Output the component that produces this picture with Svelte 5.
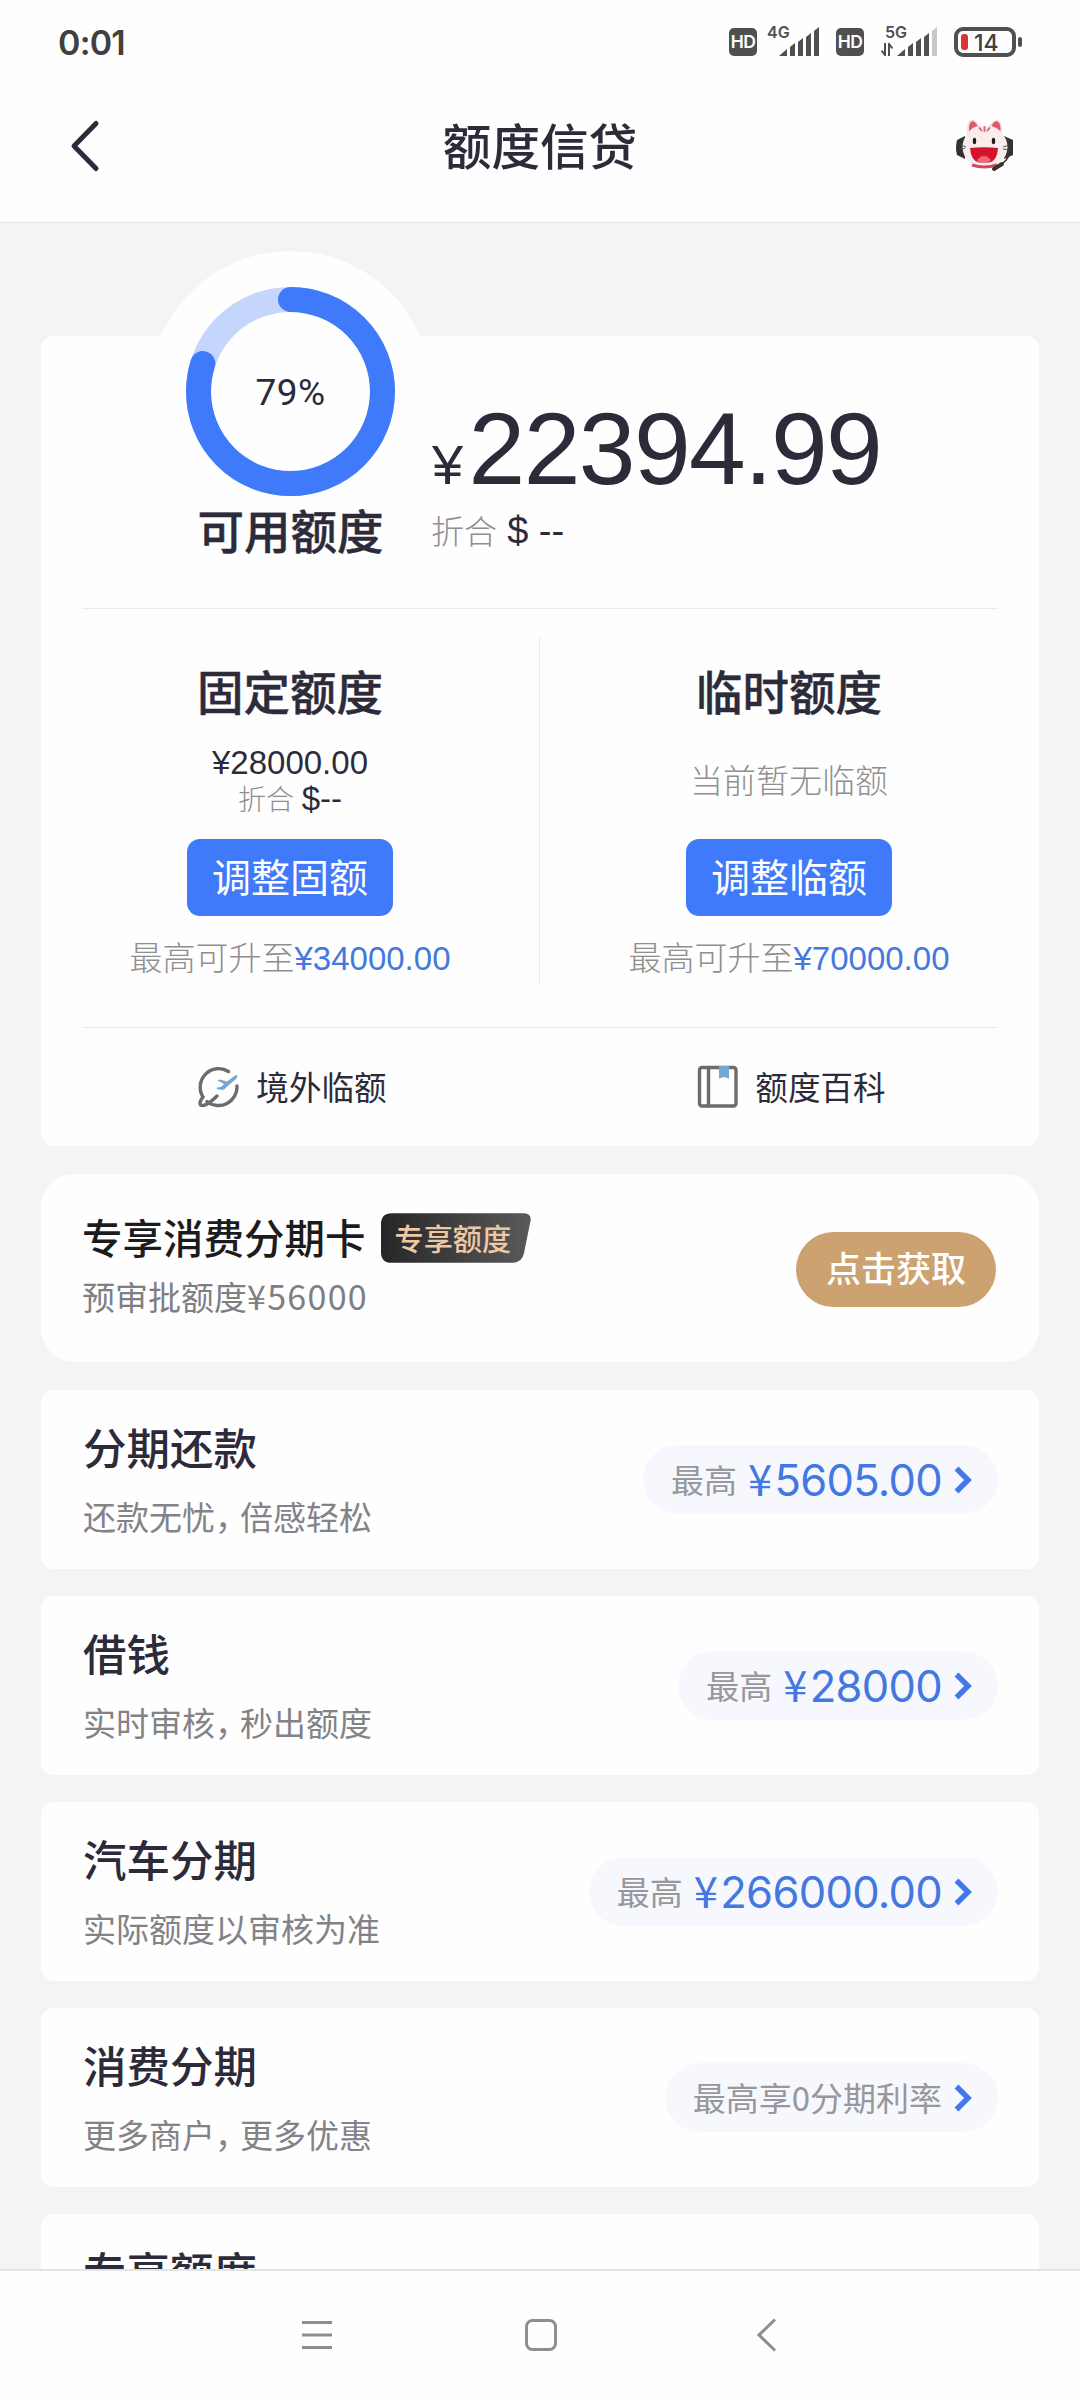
<script lang="ts">
	interface Product {
		title: string;
		desc: string;
		label?: string;
		amount?: string;
	}

	const percent = 79;

	const quotas = [
		{ title: '固定额度', amount: '28000.00', button: '调整固额', max: '34000.00' },
		{ title: '临时额度', amount: '', button: '调整临额', max: '70000.00' }
	];

	const products: Product[] = [
		{ title: '分期还款', desc: '还款无忧，倍感轻松', label: '最高', amount: '5605.00' },
		{ title: '借钱', desc: '实时审核，秒出额度', label: '最高', amount: '28000' },
		{ title: '汽车分期', desc: '实际额度以审核为准', label: '最高', amount: '266000.00' },
		{ title: '消费分期', desc: '更多商户，更多优惠', label: '最高享0分期利率' },
		{ title: '专享额度', desc: '' }
	];

	const radius = 92;
	const circumference = 2 * Math.PI * radius;
	// the round cap sits a little past the exact value
	const dash = $derived((circumference * (percent + 0.8)) / 100);
</script>

{#snippet signal(weak: boolean)}
	<svg class="bars" width="41" height="30" viewBox="0 0 41 30">
		<path d="M0 29 L8 22 V29 Z" />
		<path d="M11 20 L16 16 V29 H11 Z" />
		<path d="M19 15 L24 11 V29 H19 Z" />
		<path d="M27 10 L32 6 V29 H27 Z" />
		<path class:weak d="M35 4 L40 0 V29 H35 Z" />
	</svg>
{/snippet}

<div class="screen">
	<div class="status">
		<span class="time">0:01</span>
		<div class="status-icons">
			<span class="hd">HD</span>
			<div class="net">
				<span class="gen">4G</span>
				{@render signal(false)}
			</div>
			<span class="hd hd-second">HD</span>
			<div class="net net-second">
				<span class="gen">5G</span>
				<svg class="updown" width="12" height="13" viewBox="0 0 12 13">
					<path d="M4 0 V12 L0.5 7.5 M8 13 V1 L11.5 5.5" />
				</svg>
				{@render signal(true)}
			</div>
			<div class="battery"><i></i><span>14</span></div>
			<b class="battery-tip"></b>
		</div>
	</div>

	<header>
		<svg class="back" width="34" height="54" viewBox="0 0 34 54">
			<path d="M27 4.5 L5 27 L27 49.5" />
		</svg>
		<h1>额度信贷</h1>
		<svg class="mascot" width="64" height="58" viewBox="0 0 64 58">
			<path d="M12 19 L4 23 Q2 31 4 38 L12 42 Z" fill="#333" />
			<path d="M51 19 L60 23 V38 L51 42 Z" fill="#333" />
			<path d="M14 17 Q13 3 19 2.500 Q24 3 27 9 H36 Q40 3 44 2.500 Q50 3 49 17 Z" fill="#f9dfe1" />
			<ellipse cx="32" cy="30" rx="22.500" ry="21" fill="#faecea" />
			<path d="M16 14 Q15.500 5 19.500 4 Q23 5 24.500 9 Q20 10 16 14 Z" fill="#dc5a72" />
			<path d="M47.500 14 Q48 5 43.500 4 Q40 5 38.500 9 Q43 10 47.500 14 Z" fill="#dc5a72" />
			<path d="M31.500 10 V14 M26.500 11 L28.500 13.500 M36.500 11 L34.500 13.500" stroke="#cf6a7c" stroke-width="2" stroke-linecap="round" />
			<ellipse cx="21.500" cy="24" rx="1.700" ry="3.200" fill="#1d1a1d" />
			<ellipse cx="40.500" cy="24" rx="1.700" ry="3.200" fill="#1d1a1d" />
			<path d="M17 31 Q31 29.500 45 31 Q44 45 35 45.500 H26 Q18 44 17 31 Z" fill="#d3122c" />
			<path d="M24 43 Q31 35 38 43 Q36 46 31 45.500 Q26 46 24 43 Z" fill="#ee6679" />
			<path d="M19 48 Q31 52 44 48" stroke="#cf4760" stroke-width="3" fill="none" />
			<path d="M8 28 L13 30 M8 33 L12 31 M50 30 L56 28 M50 32 L56 33" stroke="#555" stroke-width="1" />
			<path d="M56 38 Q54 44 47 48" stroke="#333" stroke-width="1.500" fill="none" />
			<path d="M49 47 L41 52" stroke="#333" stroke-width="4" stroke-linecap="round" />
		</svg>
	</header>

	<main>
		<section class="card summary">
			<div class="dome"></div>
			<div class="overview">
				<div class="gauge">
					<div class="ring">
						<svg width="209" height="209" viewBox="0 0 209 209">
							<circle class="track" cx="104.500" cy="104.500" r={radius} />
							<circle
								class="value"
								cx="104.500"
								cy="104.500"
								r={radius}
								stroke-dasharray="{dash} {circumference}"
								transform="rotate(-90 104.500 104.500)"
							/>
						</svg>
						<span class="percent">{percent}%</span>
					</div>
					<div class="quota-title">可用额度</div>
				</div>
				<div class="available">
					<div class="total"><span class="yen">¥</span>22394.99</div>
					<div class="convert">折合 <span>$ --</span></div>
				</div>
			</div>

			<div class="quotas">
				{#each quotas as quota}
					<div class="quota">
						<div class="quota-title">{quota.title}</div>
						<div class="quota-body">
							{#if quota.amount}
								<div class="quota-amount">¥{quota.amount}</div>
								<div class="quota-convert">折合 <span>$--</span></div>
							{:else}
								<div class="quota-empty">当前暂无临额</div>
							{/if}
						</div>
						<button class="adjust">{quota.button}</button>
						<div class="hint">最高可升至<span>¥{quota.max}</span></div>
					</div>
				{/each}
			</div>

			<div class="links">
				<div class="link">
					<svg width="46" height="46" viewBox="0 0 46 46">
						<path class="line" d="M35.500 7.500 A18.500 18.500 0 0 0 10 33 C6 38 6 42 10 41.500 C15 41 20 36 24 32" />
						<path class="line" d="M44 22 A18.500 18.500 0 0 1 14 37.500" />
						<path class="fill" d="M24.500 16.500 L27 15.500 L34 17.500 L42 11.500 L44.500 11 L44 14 L37 20 L31 25.500 L28.500 26 L23.500 25 L24 23.500 L28 23 L31 20 Z" />
					</svg>
					<span>境外临额</span>
				</div>
				<div class="link">
					<svg width="46" height="46" viewBox="0 0 46 46">
						<rect class="line" x="7.500" y="3.500" width="36.500" height="38.500" rx="2.500" />
						<path class="line" d="M16.500 3.500 V42" />
						<path class="fill" d="M27 2 H37 V14.500 L32 13 L27 14.500 Z" />
					</svg>
					<span>额度百科</span>
				</div>
			</div>
		</section>

		<section class="card promo">
			<div>
				<div class="promo-head">
					<span class="promo-title">专享消费分期卡</span>
					<div class="tag">
						<svg width="150" height="50" viewBox="0 0 151 50">
							<defs>
								<linearGradient id="tagFill" x1="0" y1="0" x2="1" y2="0">
									<stop offset="0" stop-color="#262626" />
									<stop offset="1" stop-color="#5a5a5a" />
								</linearGradient>
							</defs>
							<path d="M11 0 H143 Q152 0 150.500 8 L144 40 Q142 50 132 50 H11 Q0 50 0 39 V11 Q0 0 11 0 Z" fill="url(#tagFill)" />
						</svg>
						<span>专享额度</span>
					</div>
				</div>
				<div class="promo-desc">预审批额度<span>¥56000</span></div>
			</div>
			<button class="claim">点击获取</button>
		</section>

		{#each products as product}
			<section class="card product">
				<div>
					<div class="product-title">{product.title}</div>
					<div class="product-desc">
						{#each product.desc.split('，') as part, i}{#if i > 0}<span class="comma">，</span>{/if}{part}{/each}
					</div>
				</div>
				{#if product.label}
					<div class="pill">
						<span class="pill-label">{product.label}</span>
						{#if product.amount}
							<span class="pill-amount"><i>¥</i>{product.amount}</span>
						{/if}
						<svg width="18" height="28" viewBox="0 0 18 28">
							<path d="M2.500 2.500 L14 14 L2.500 25.500" />
						</svg>
					</div>
				{/if}
			</section>
		{/each}
	</main>

	<nav>
		<svg width="34" height="34" viewBox="0 0 34 34"><path d="M2 4.500 H32 M2 17 H32 M2 29.500 H32" /></svg>
		<svg width="34" height="34" viewBox="0 0 34 34"><rect x="2.500" y="2.500" width="29" height="29" rx="6" /></svg>
		<svg width="34" height="34" viewBox="0 0 34 34"><path d="M24 1.500 L8 17 L24 32.500" /></svg>
	</nav>
</div>

<style>
	:global(body) {
		margin: 0;
	}

	.screen {
		display: flex;
		flex-direction: column;
		width: 1080px;
		height: 2400px;
		overflow: hidden;
		background: #f4f4f4;
		color: #2d2b3a;
		font-family: 'Noto Sans CJK SC', sans-serif;
	}

	button {
		border: 0;
		padding: 0;
		font-family: inherit;
	}

	/* --- Status bar --- */
	.status {
		display: flex;
		justify-content: space-between;
		height: 84px;
		padding: 0 58px;
		background: #fefefe;
	}

	.time {
		font: 600 34px/86px Inter, sans-serif;
		letter-spacing: -0.8px;
		color: #404040;
	}

	.status-icons {
		display: flex;
		align-items: center;
		height: 84px;
		color: #505050;
	}

	.hd {
		width: 28px;
		border-radius: 5px;
		background: #505050;
		color: #fff;
		font: 600 17.5px/28px Inter, sans-serif;
		letter-spacing: -0.5px;
		text-align: center;
	}

	.hd-second {
		margin-left: 16px;
	}

	.net {
		position: relative;
		width: 54px;
		height: 30px;
		margin-left: 9px;
	}

	.net-second {
		width: 58px;
		margin-left: 16px;
	}

	.gen {
		position: absolute;
		top: -3px;
		left: 1px;
		font: 600 16px/16px Inter, sans-serif;
	}

	.net-second .gen {
		left: 5px;
	}

	.bars {
		position: absolute;
		right: 0;
		top: 0;
		fill: #505050;
	}

	.bars .weak {
		fill: #c8c8c8;
	}

	.updown {
		position: absolute;
		left: 1px;
		bottom: 1px;
		fill: none;
		stroke: #505050;
		stroke-width: 2;
	}

	.battery {
		display: flex;
		align-items: center;
		box-sizing: border-box;
		width: 62px;
		height: 30px;
		margin-left: 16px;
		padding-left: 3px;
		border: 4px solid #505050;
		border-radius: 9px;
	}

	.battery i {
		width: 7px;
		height: 16px;
		border-radius: 3px;
		background: #dc3434;
	}

	.battery span {
		margin: 1px 0 0 6px;
		color: #404040;
		font: 500 23px/22px Inter, sans-serif;
	}

	.battery-tip {
		width: 4px;
		height: 10px;
		margin-left: 2px;
		border-radius: 2px;
		background: #505050;
	}

	/* --- Header --- */
	header {
		display: flex;
		align-items: center;
		justify-content: space-between;
		box-sizing: border-box;
		height: 139px;
		padding: 0 63px 15px 69px;
		border-bottom: 1px solid #e8e8e8;
		background: #fefefe;
	}

	.back {
		width: 34px;
		margin-right: 24px;
		fill: none;
		stroke: #2d2b3a;
		stroke-width: 5;
		stroke-linecap: round;
		stroke-linejoin: round;
	}

	h1 {
		margin: -4px 0 0;
		font-size: 48.6px;
		font-weight: 500;
		line-height: 70px;
	}

	/* --- Cards --- */
	main {
		display: flex;
		flex: 1;
		flex-direction: column;
		gap: 27px;
		min-height: 0;
		padding: 113px 41px 0;
		overflow: hidden;
	}

	.card {
		flex-shrink: 0;
		border-radius: 13px;
		background: #fefefe;
	}

	.summary {
		position: relative;
		height: 810px;
		margin-bottom: 1px;
	}

	.dome {
		position: absolute;
		top: -85px;
		left: 108px;
		width: 283px;
		height: 283px;
		border-radius: 50%;
		background: #fefefe;
	}

	.overview {
		position: relative;
		display: flex;
		height: 273px;
	}

	.overview::after,
	.quotas::after {
		content: '';
		position: absolute;
		right: 41px;
		bottom: 0;
		left: 41px;
		height: 1px;
		background: #ebebeb;
	}

	.gauge {
		display: flex;
		flex-direction: column;
		align-items: center;
		box-sizing: border-box;
		width: 391px;
		padding-left: 108px;
		margin-top: -49px;
	}

	.ring {
		display: grid;
		place-items: center;
		height: 209px;
	}

	.ring > * {
		grid-area: 1 / 1;
	}

	.ring circle {
		fill: none;
		stroke-width: 25;
	}

	.ring .track {
		stroke: #c5d6fd;
	}

	.ring .value {
		stroke: #3e7afa;
		stroke-linecap: round;
	}

	.percent {
		margin-top: 2px;
		font: 400 37px/40px Roboto, sans-serif;
		letter-spacing: 0.5px;
	}

	.quota-title {
		font-size: 46.5px;
		font-weight: 500;
		line-height: 60px;
		-webkit-text-stroke: 0.4px currentColor;
	}

	.gauge .quota-title {
		margin-top: 3px;
	}

	.available {
		padding-top: 63px;
		font-family: 'Liberation Sans', 'Noto Sans CJK SC', sans-serif;
	}

	.total {
		font-size: 102px;
		letter-spacing: -1.6px;
		line-height: 100px;
		white-space: nowrap;
	}

	.yen {
		margin-right: 7px;
		font-size: 56px;
		line-height: 1;
	}

	.convert {
		margin-top: 12px;
		margin-left: -1px;
		color: #8f8f8f;
		font-size: 33px;
		font-weight: 300;
		line-height: 44px;
	}

	.convert span {
		margin-left: 1px;
		color: #2d2b3a;
		font-size: 38px;
		font-weight: 400;
		line-height: 1;
	}

	.quotas {
		position: relative;
		display: flex;
		height: 419px;
	}

	.quota {
		display: flex;
		flex: 1;
		flex-direction: column;
		align-items: center;
		box-sizing: border-box;
		padding-top: 51px;
		padding-right: 1px;
	}

	.quota:first-child::after {
		content: '';
		position: absolute;
		top: 28px;
		left: 498px;
		width: 1px;
		height: 348px;
		background: #ebebeb;
	}

	.quota-body {
		display: flex;
		flex-direction: column;
		align-items: center;
		justify-content: center;
		height: 119px;
		font-family: 'Liberation Sans', 'Noto Sans CJK SC', sans-serif;
	}

	.quota-amount {
		padding-top: 5px;
		font-size: 33px;
		line-height: 38px;
	}

	.quota-convert {
		color: #8f8f8f;
		font-size: 28px;
		font-weight: 300;
		line-height: 38px;
	}

	.quota-convert span {
		color: #2d2b3a;
		font-size: 33px;
		font-weight: 400;
		line-height: 1;
	}

	.quota-empty {
		padding-top: 4px;
		color: #8f8f8f;
		font-size: 33px;
		font-weight: 300;
		line-height: 40px;
	}

	.adjust {
		width: 206px;
		height: 77px;
		padding-bottom: 5px;
		border-radius: 13px;
		background: #3e7afa;
		color: #fff;
		font-size: 39px;
		line-height: 72px;
	}

	.hint {
		margin-top: 21px;
		color: #8f8f8f;
		font-family: 'Liberation Sans', 'Noto Sans CJK SC', sans-serif;
		font-size: 33px;
		font-weight: 300;
		line-height: 44px;
	}

	.hint span {
		color: #4378e0;
		font-weight: 400;
	}

	.links {
		display: flex;
		height: 118px;
	}

	.link {
		display: flex;
		flex: 1;
		gap: 17px;
		align-items: center;
		justify-content: center;
		padding-right: 1px;
		font-size: 32.6px;
		line-height: 44px;
	}

	.link span {
		margin-top: -3px;
	}

	.line {
		fill: none;
		stroke: #6c6c6c;
		stroke-width: 3.4;
		stroke-linecap: round;
	}

	.fill {
		fill: #78a6d2;
	}

	/* --- Promo --- */
	.promo {
		display: flex;
		align-items: flex-start;
		justify-content: space-between;
		box-sizing: border-box;
		height: 188px;
		padding: 39px 43px 0 41px;
		border-radius: 33px;
	}

	.promo-head {
		display: flex;
		align-items: center;
		height: 50px;
	}

	.promo-title {
		margin-top: -3px;
		color: #1c1c1e;
		font-size: 40.5px;
		font-weight: 500;
		line-height: 50px;
	}

	.tag {
		display: grid;
		place-items: center start;
		margin-left: 15px;
	}

	.tag > * {
		grid-area: 1 / 1;
	}

	.tag span {
		padding: 0 0 3px 14px;
		color: #efc8a3;
		font-size: 29.2px;
		font-weight: 500;
		line-height: 40px;
	}

	.promo-desc {
		margin-top: 11px;
		color: #7e7e84;
		font-size: 33px;
		line-height: 44px;
	}

	.promo-desc span {
		font-size: 34px;
		letter-spacing: 1.3px;
		line-height: 1;
	}

	.claim {
		width: 200px;
		height: 75px;
		padding-bottom: 5px;
		margin-top: 19px;
		border-radius: 38px;
		background: #cda271;
		color: #fff;
		font-size: 35px;
		font-weight: 500;
		line-height: 70px;
	}

	/* --- Products --- */
	.product {
		display: flex;
		align-items: center;
		justify-content: space-between;
		box-sizing: border-box;
		height: 179px;
		padding: 0 41px 0 42px;
	}

	.promo + .product {
		margin-top: 1px;
	}

	.product-title {
		margin-top: -4px;
		font-size: 43.5px;
		font-weight: 500;
		line-height: 60px;
	}

	.product-desc {
		height: 44px;
		margin-top: 17px;
		color: #828287;
		font-size: 33px;
		line-height: 44px;
	}

	.comma {
		letter-spacing: -8px;
	}

	.pill {
		display: flex;
		align-items: center;
		height: 69px;
		padding: 0 26px 0 28px;
		border-radius: 35px;
		background: #f6f8fd;
	}

	.pill-label {
		margin-top: -2px;
		color: #97979c;
		font-size: 33px;
		line-height: 60px;
	}

	.pill-amount {
		margin-left: 11px;
		color: #4378e0;
		font: 400 43.5px/60px Inter, sans-serif;
		letter-spacing: -0.7px;
	}

	.pill-amount i {
		margin-right: 3px;
		font-family: 'Noto Sans CJK SC', sans-serif;
		font-style: normal;
		font-weight: 400;
		line-height: 1;
	}

	.pill svg {
		margin-left: 12px;
		fill: none;
		stroke: #4378e8;
		stroke-width: 5.5;
	}

	/* --- System navigation --- */
	nav {
		display: flex;
		align-items: center;
		justify-content: space-between;
		box-sizing: border-box;
		height: 131px;
		padding: 0 295px 2px 300px;
		border-top: 2px solid #e4e4e4;
		background: #fefefe;
	}

	nav svg {
		fill: none;
		stroke: #8e8e8e;
		stroke-width: 3;
	}

	nav svg:nth-child(2) {
		margin-right: 4px;
	}
</style>
